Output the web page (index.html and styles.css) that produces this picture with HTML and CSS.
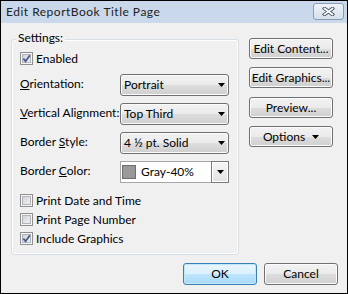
FILE: index.html
```html
<!DOCTYPE html>
<html>
<head>
<meta charset="utf-8">
<link rel="stylesheet" href="styles.css">
</head>
<body>
<div class="window">
  <div class="titlebar">
    <span class="title">Edit ReportBook Title Page</span>
    <div class="close">
      <svg width="13" height="9" viewBox="0 0 13 9"><path d="M2.5 1.5L10.5 7.5M10.5 1.5L2.5 7.5" stroke="#56606e" stroke-width="3.6" stroke-linecap="square"/><path d="M2.5 1.5L10.5 7.5M10.5 1.5L2.5 7.5" stroke="#fff" stroke-width="1.6" stroke-linecap="square"/></svg>
    </div>
  </div>
  <div class="body">
    <div class="main">
      <div class="group">
        <div class="legend">Settings:</div>
        <div class="check-row">
          <span class="cb"><span class="cb-box"><svg width="9" height="9" viewBox="0 0 9 9"><path d="M1.3 4.6L3.6 7.2L7.9 1.2" fill="none" stroke="#4a5d90" stroke-width="1.8"/></svg></span></span>
          <span>Enabled</span>
        </div>
        <div class="fields">
          <div class="field">
            <span class="flabel"><u>O</u>rientation:</span>
            <div class="combo"><span>Portrait</span><svg class="arrow" width="7" height="4" viewBox="0 0 7 4"><path d="M0 0H7L3.5 4Z"/></svg></div>
          </div>
          <div class="field">
            <span class="flabel"><u>V</u>ertical Alignment:</span>
            <div class="combo"><span>Top Third</span><svg class="arrow" width="7" height="4" viewBox="0 0 7 4"><path d="M0 0H7L3.5 4Z"/></svg></div>
          </div>
          <div class="field">
            <span class="flabel">Border <u>S</u>tyle:</span>
            <div class="combo"><span>4 ½ pt. Solid</span><svg class="arrow" width="7" height="4" viewBox="0 0 7 4"><path d="M0 0H7L3.5 4Z"/></svg></div>
          </div>
          <div class="field">
            <span class="flabel">Border <u>C</u>olor:</span>
            <div class="combo-edit">
              <span class="swatch"></span>
              <span class="edit-text">Gray-40%</span>
              <span class="drop"><svg width="7" height="4" viewBox="0 0 7 4"><path d="M0 0H7L3.5 4Z"/></svg></span>
            </div>
          </div>
        </div>
        <div class="checks">
          <div class="check-row">
            <span class="cb"><span class="cb-box"></span></span>
            <span>Print Date and Time</span>
          </div>
          <div class="check-row">
            <span class="cb"><span class="cb-box"></span></span>
            <span>Print Page Number</span>
          </div>
          <div class="check-row">
            <span class="cb"><span class="cb-box"><svg width="9" height="9" viewBox="0 0 9 9"><path d="M1.3 4.6L3.6 7.2L7.9 1.2" fill="none" stroke="#4a5d90" stroke-width="1.8"/></svg></span></span>
            <span>Include Graphics</span>
          </div>
        </div>
      </div>
      <div class="side">
        <div class="btn side-btn">Edit Content...</div>
        <div class="btn side-btn">Edit Graphics...</div>
        <div class="btn side-btn shift">Preview...</div>
        <div class="btn side-btn">Options<svg class="opt-arrow" width="7" height="4" viewBox="0 0 7 4"><path d="M0 0H7L3.5 4Z"/></svg></div>
      </div>
    </div>
    <div class="footer">
      <div class="btn foot-btn default">OK</div>
      <div class="btn foot-btn">Cancel</div>
    </div>
  </div>
</div>
</body>
</html>
```
FILE: styles.css
```css
body {
  margin: 0;
  font-family: Lato, "Noto Sans", sans-serif;
  font-size: 12px;
  color: #000;
}
.window {
  width: 348px;
  height: 294px;
  box-sizing: border-box;
  border: 1px solid #000;
  background: #f0f0f0;
  display: flex;
  flex-direction: column;
}
.titlebar {
  height: 22px;
  flex: none;
  background: #c9d9eb;
  display: flex;
  align-items: flex-start;
  padding: 0 3px 0 5px;
}
.title {
  line-height: 22px;
  color: #222;
  letter-spacing: 0.5px;
}
.close {
  margin-left: auto;
  margin-top: 2px;
  width: 31px;
  height: 17px;
  box-sizing: border-box;
  border: 1px solid #8e9cb0;
  border-radius: 3px;
  background: linear-gradient(#eef3f9, #d5e0ec);
  display: flex;
  align-items: center;
  justify-content: center;
}
.body {
  flex: 1;
  display: flex;
  flex-direction: column;
}
.main {
  display: flex;
  gap: 10px;
  padding: 15px 14px 0 10px;
}
.group {
  margin-top: 1px;
  width: 228px;
  height: 216px;
  box-sizing: border-box;
  border: 1px solid #d5dfe5;
  border-radius: 3px;
  box-shadow: inset 0 0 0 1px #fff;
  padding: 0 9px 0 8px;
  display: flex;
  flex-direction: column;
}
.legend {
  align-self: flex-start;
  margin: -10px 0 3px -4px;
  padding: 0 2px;
  line-height: 16px;
  background: #f0f0f0;
}
.check-row {
  display: flex;
  align-items: center;
  gap: 3px;
  height: 19px;
  line-height: 19px;
}
.cb {
  flex: none;
  width: 13px;
  height: 13px;
  box-sizing: border-box;
  border: 1px solid #8e8f8f;
  background: #f6f6f6;
  padding: 1px;
  display: flex;
}
.cb-box {
  width: 9px;
  height: 9px;
  background: linear-gradient(135deg, #cdd0d4, #f4f4f4);
  box-shadow: inset 0 0 0 1px #b2b6bc;
  display: flex;
}
.fields {
  margin-top: 6px;
  display: flex;
  flex-direction: column;
  gap: 7px;
}
.field {
  display: flex;
  height: 22px;
}
.flabel {
  width: 100px;
  flex: none;
  line-height: 19px;
  white-space: nowrap;
  overflow: hidden;
}
.combo {
  width: 109px;
  height: 22px;
  box-sizing: border-box;
  border: 1px solid #707070;
  border-radius: 3px;
  background: linear-gradient(#f2f2f2 0%, #ebebeb 50%, #dddddd 51%, #cfcfcf 100%);
  box-shadow: inset 0 0 0 1px #fbfbfb;
  display: flex;
  align-items: center;
  padding: 0 3px 0 3px;
  line-height: 20px;
}
.arrow {
  margin-left: auto;
}
.combo-edit {
  width: 109px;
  height: 22px;
  box-sizing: border-box;
  border: 1px solid #a8a8a8;
  background: #fff;
  display: flex;
  align-items: center;
  line-height: 20px;
}
.swatch {
  width: 14px;
  height: 14px;
  box-sizing: border-box;
  margin-left: 1px;
  border: 1px solid #6e6e6e;
  background: #999;
  flex: none;
}
.edit-text {
  margin-left: 5px;
}
.drop {
  margin: -1px -1px -1px auto;
  width: 18px;
  height: 22px;
  box-sizing: border-box;
  border: 1px solid #7a7a7a;
  background: linear-gradient(#f6f6f6, #e2e2e2);
  box-shadow: inset 0 0 0 1px #fff;
  display: flex;
  align-items: center;
  justify-content: center;
  flex: none;
}
.checks {
  margin-top: 8px;
  display: flex;
  flex-direction: column;
}
.side {
  width: 84px;
  display: flex;
  flex-direction: column;
  gap: 8px;
}
.btn {
  box-sizing: border-box;
  border: 1px solid #707070;
  border-radius: 3px;
  background: linear-gradient(#f2f2f2 0%, #ebebeb 50%, #dddddd 51%, #cfcfcf 100%);
  box-shadow: inset 0 0 0 1px #fcfcfc;
  display: flex;
  align-items: center;
  justify-content: center;
  white-space: nowrap;
}
.side-btn {
  height: 21px;
  line-height: 19px;
}
.shift {
  margin-top: 1px;
}
.opt-arrow {
  margin-left: 7px;
}
.footer {
  display: flex;
  justify-content: flex-end;
  gap: 7px;
  padding: 8px 9px 0 0;
}
.foot-btn {
  width: 74px;
  height: 22px;
  line-height: 20px;
}
.default {
  border-color: #3c7fb1;
  background: linear-gradient(#eaf6fd 0%, #d9f0fc 50%, #bee6fd 51%, #a7d9f5 100%);
  box-shadow: inset 0 0 0 1px #c0e8fb;
}
```
